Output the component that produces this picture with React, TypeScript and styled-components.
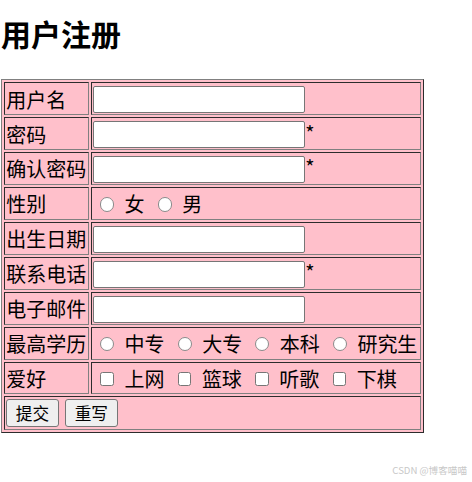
import React from 'react';
import styled, { createGlobalStyle } from 'styled-components';

const GlobalStyle = createGlobalStyle`
  html, body {
    margin: 0;
    padding: 0;
    background: #ffffff;
  }
  body {
    font-family: "Noto Sans CJK SC", "Noto Sans", sans-serif;
    color: #000000;
  }
`;

const Page = styled.div`
  position: relative;
  box-sizing: border-box;
  width: 472px;
  height: 482px;
  padding-left: 1px;
  overflow: hidden;
`;

const Title = styled.h2`
  margin: 15px 0 28px;
  font-size: 30px;
  line-height: 36px;
  font-weight: 700;
`;

const Table = styled.table`
  border: 1px outset grey;
  border-spacing: 2px;
  background: pink;
  font-size: 20px;
`;

const Cell = styled.td<{ $tight?: boolean }>`
  box-sizing: border-box;
  border: 1px inset grey;
  padding: ${(p) => (p.$tight ? '1.25px' : '2.6px 1.25px 0.25px')};
  vertical-align: middle;
  white-space: nowrap;
`;

const LabelCell = styled(Cell)`
  width: 85px;
  line-height: 28.1px;
`;

const FieldCell = styled(Cell)`
  width: 330px;
`;

const FieldLine = styled.div<{ $gap?: number }>`
  display: flex;
  align-items: center;
  gap: ${(p) => p.$gap ?? 0}px;
  height: 28.1px;
  line-height: 28.1px;
`;

const ButtonLine = styled.div`
  display: flex;
  align-items: flex-start;
  gap: 6.7px;
  height: 29.4px;
`;

const TextInput = styled.input`
  box-sizing: border-box;
  width: 212px;
  height: 26.7px;
  margin: 0;
  padding: 1px 3px;
  border: 1px solid #767676;
  border-radius: 2px;
  background: #ffffff;
  font-family: inherit;
  font-size: 16px;
  outline: none;
`;

const Star = styled.span`
  align-self: flex-start;
  line-height: 24px;
`;

const Choice = styled.label`
  display: inline-flex;
  align-items: center;
`;

const RadioMark = styled.input.attrs({ type: 'radio' })`
  appearance: none;
  box-sizing: border-box;
  width: 14.3px;
  height: 14.3px;
  margin: 0 10.3px 0 6.75px;
  border: 1px solid #8a8a8a;
  border-radius: 50%;
  background: #ffffff;
`;

const CheckMark = styled.input.attrs({ type: 'checkbox' })`
  appearance: none;
  box-sizing: border-box;
  width: 13.6px;
  height: 13.6px;
  margin: 0 10.6px 0 7px;
  border: 1px solid #767676;
  border-radius: 2.5px;
  background: #ffffff;
`;

const Button = styled.button`
  box-sizing: border-box;
  width: 52.3px;
  height: 28.7px;
  margin: 0;
  padding: 0;
  font-family: inherit;
  font-size: 16.67px;
  line-height: 1;
  color: #000000;
  background: #efefef;
  border: 1px solid #767676;
  border-radius: 3px;
`;

const Watermark = styled.div`
  position: absolute;
  right: 5px;
  top: 464px;
  font-size: 9.6px;
  line-height: 12px;
  color: #c8c8c8;
  font-family: "Noto Sans CJK SC", "Noto Sans", sans-serif;
  white-space: nowrap;
`;

type InputRow = { label: string; type: string; required?: boolean };

const InputField: React.FC<InputRow> = ({ label, type, required }) => (
  <tr>
    <LabelCell>{label}</LabelCell>
    <FieldCell>
      <FieldLine>
        <TextInput type={type} />
        {required && <Star>*</Star>}
      </FieldLine>
    </FieldCell>
  </tr>
);

const ChoiceField: React.FC<{ label: string; name: string; options: string[]; kind: 'radio' | 'checkbox' }> = ({
  label,
  name,
  options,
  kind,
}) => (
  <tr>
    <LabelCell>{label}</LabelCell>
    <FieldCell>
      <FieldLine $gap={6.25}>
        {options.map((o) => (
          <Choice key={o}>
            {kind === 'radio' ? <RadioMark name={name} /> : <CheckMark name={name} />}
            {o}
          </Choice>
        ))}
      </FieldLine>
    </FieldCell>
  </tr>
);

export default function App() {
  return (
    <>
      <GlobalStyle />
      <Page>
        <Title>用户注册</Title>
        <Table>
          <tbody>
            <InputField label="用户名" type="text" />
            <InputField label="密码" type="password" required />
            <InputField label="确认密码" type="password" required />
            <ChoiceField label="性别" name="sex" kind="radio" options={['女', '男']} />
            <InputField label="出生日期" type="text" />
            <InputField label="联系电话" type="text" required />
            <InputField label="电子邮件" type="text" />
            <ChoiceField label="最高学历" name="edu" kind="radio" options={['中专', '大专', '本科', '研究生']} />
            <ChoiceField label="爱好" name="hobby" kind="checkbox" options={['上网', '篮球', '听歌', '下棋']} />
            <tr>
              <Cell colSpan={2} $tight>
                <ButtonLine>
                  <Button type="submit">提交</Button>
                  <Button type="reset">重写</Button>
                </ButtonLine>
              </Cell>
            </tr>
          </tbody>
        </Table>
        <Watermark>CSDN @博客喵喵</Watermark>
      </Page>
    </>
  );
}
